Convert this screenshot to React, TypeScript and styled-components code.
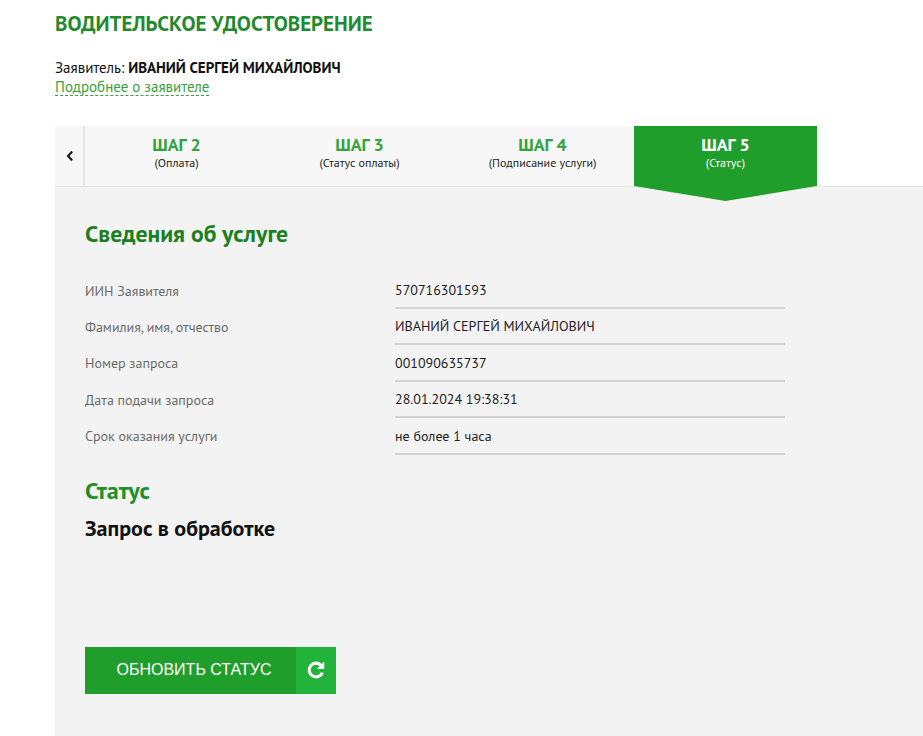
import React from "react";
import styled, { createGlobalStyle } from "styled-components";

const GlobalStyle = createGlobalStyle`
  html, body { margin: 0; padding: 0; background: #ffffff; }
  body { font-family: "PT Sans", "Roboto Condensed", "Noto Sans", sans-serif; color: #111; overflow: hidden; }
  * { box-sizing: border-box; }
`;

const Page = styled.div`
  padding: 12px 0 0 55px;
  min-height: 100vh;
  display: flex;
  flex-direction: column;
`;

const Title = styled.h1`
  margin: 0;
  font-size: 21px;
  line-height: 24px;
  font-weight: 700;
  color: #1f8a2e;
  text-transform: uppercase;
`;

const Applicant = styled.div`
  margin-top: 22px;
  font-size: 15px;
  line-height: 20px;
  color: #111;
  b { font-weight: 700; }
`;

const MoreLink = styled.a`
  display: inline-block;
  align-self: flex-start;
  font-size: 15px;
  line-height: 17px;
  color: #3a9e3f;
  text-decoration: none;
  border-bottom: 1px dashed #3a9e3f;
`;

const StepsBar = styled.div`
  margin-top: 30px;
  display: flex;
  height: 61px;
  border-bottom: 1px solid #e4e4e4;
  position: relative;
  z-index: 1;
`;

const PrevButton = styled.button`
  width: 30px;
  height: 60px;
  border: none;
  border-right: 2px solid #e6e6e6;
  background: #f7f7f7;
  display: flex;
  align-items: center;
  justify-content: center;
  padding: 0 0 0 2px;
  cursor: pointer;
`;

const Step = styled.div<{ $active?: boolean }>`
  width: 183px;
  height: 60px;
  position: relative;
  padding-top: 8px;
  text-align: center;
  background: ${(p) => (p.$active ? "#1f9e2b" : "#f7f7f7")};
  &::after {
    content: "";
    display: ${(p) => (p.$active ? "block" : "none")};
    position: absolute;
    left: 0;
    right: 0;
    top: 60px;
    height: 15px;
    background: #1f9e2b;
    clip-path: polygon(0 0, 100% 0, 100% 0, 50% 100%, 0 0);
  }
`;

const StepNum = styled.div<{ $active?: boolean }>`
  font-size: 18px;
  line-height: 22px;
  font-weight: 700;
  color: ${(p) => (p.$active ? "#ffffff" : "#33a33f")};
`;

const StepName = styled.div<{ $active?: boolean }>`
  font-size: 12px;
  line-height: 14px;
  color: ${(p) => (p.$active ? "#ffffff" : "#222")};
`;

const Panel = styled.section`
  flex: 1;
  background: #f3f3f3;
  padding: 32px 30px 60px;
`;

const Heading = styled.h2`
  margin: 0;
  font-size: 23.7px;
  line-height: 29px;
  font-weight: 700;
  color: #1c7f22;
`;

const InfoList = styled.div`
  margin-top: 24.6px;
`;

const InfoRow = styled.div`
  display: grid;
  grid-template-columns: 310px 390px;
`;

const Label = styled.div`
  padding: 8px 0 8.4px;
  font-size: 14px;
  line-height: 20px;
  color: #6b6b6b;
`;

const Value = styled.div`
  padding: 7.5px 0 6.9px;
  font-size: 14px;
  line-height: 20px;
  color: #1e1e1e;
  border-bottom: 2px solid #d3d3d3;
`;

const StatusTitle = styled.h3`
  margin: 22px 0 0;
  font-size: 24px;
  line-height: 28px;
  font-weight: 700;
  color: #22902a;
`;

const StatusText = styled.div`
  margin-top: 10px;
  font-size: 22px;
  line-height: 26px;
  font-weight: 700;
  color: #111;
`;

const RefreshButton = styled.button`
  margin-top: 106px;
  display: flex;
  height: 47px;
  border: none;
  padding: 0;
  cursor: pointer;
  background: transparent;
`;

const RefreshLabel = styled.span`
  width: 211px;
  height: 47px;
  display: flex;
  align-items: center;
  justify-content: center;
  padding-left: 7px;
  background: #1f9e2b;
  color: #ffffff;
  font-family: "Liberation Sans", Arial, sans-serif;
  font-size: 16px;
  text-transform: uppercase;
`;

const RefreshIcon = styled.span`
  width: 40px;
  height: 47px;
  display: flex;
  align-items: center;
  justify-content: center;
  background: #22b33a;
`;

const rows: [string, string][] = [
  ["ИИН Заявителя", "570716301593"],
  ["Фамилия, имя, отчество", "ИВАНИЙ СЕРГЕЙ МИХАЙЛОВИЧ"],
  ["Номер запроса", "001090635737"],
  ["Дата подачи запроса", "28.01.2024 19:38:31"],
  ["Срок оказания услуги", "не более 1 часа"],
];

const steps = [
  { n: "ШАГ 2", name: "(Оплата)" },
  { n: "ШАГ 3", name: "(Статус оплаты)" },
  { n: "ШАГ 4", name: "(Подписание услуги)" },
  { n: "ШАГ 5", name: "(Статус)", active: true },
];

export default function App() {
  return (
    <>
      <GlobalStyle />
      <Page>
        <Title>Водительское удостоверение</Title>
        <Applicant>
          Заявитель: <b>ИВАНИЙ СЕРГЕЙ МИХАЙЛОВИЧ</b>
        </Applicant>
        <MoreLink href="#">Подробнее о заявителе</MoreLink>
        <StepsBar>
          <PrevButton aria-label="Назад">
            <svg width="8" height="12" viewBox="0 0 8 12">
              <path d="M6.2 1.5 L2 6 L6.2 10.5" fill="none" stroke="#111" strokeWidth="2" />
            </svg>
          </PrevButton>
          {steps.map((s) => (
            <Step key={s.n} $active={s.active}>
              <StepNum $active={s.active}>{s.n}</StepNum>
              <StepName $active={s.active}>{s.name}</StepName>
            </Step>
          ))}
        </StepsBar>
        <Panel>
          <Heading>Сведения об услуге</Heading>
          <InfoList>
            {rows.map(([l, v]) => (
              <InfoRow key={l}>
                <Label>{l}</Label>
                <Value>{v}</Value>
              </InfoRow>
            ))}
          </InfoList>
          <StatusTitle>Статус</StatusTitle>
          <StatusText>Запрос в обработке</StatusText>
          <RefreshButton>
            <RefreshLabel>Обновить статус</RefreshLabel>
            <RefreshIcon>
              <svg width="20" height="20" viewBox="0 0 18 18">
                <path
                  d="M14.8 11.4 A6.2 6.2 0 1 1 13.4 4.6"
                  fill="none"
                  stroke="#fff"
                  strokeWidth="2.8"
                />
                <path d="M16.4 1.4 L16.4 8 L9.8 8 Z" fill="#fff" />
              </svg>
            </RefreshIcon>
          </RefreshButton>
        </Panel>
      </Page>
    </>
  );
}
